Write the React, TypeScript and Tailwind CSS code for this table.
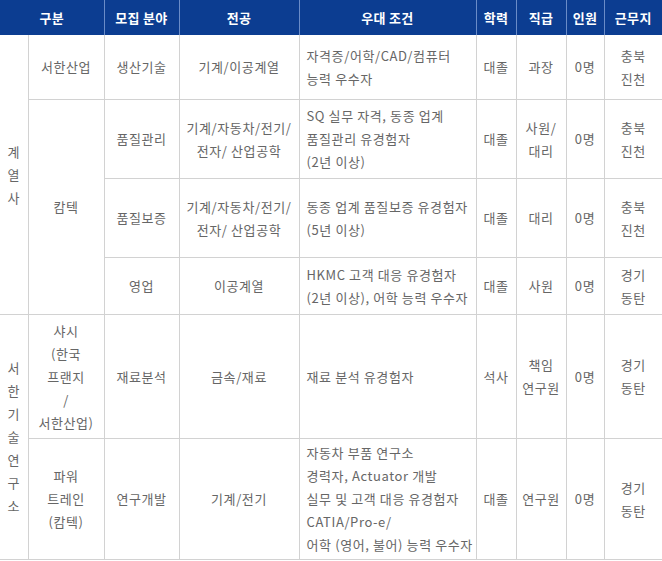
import React from "react";

const font = { fontFamily: '"Noto Sans CJK KR", "Noto Sans", sans-serif' };

function V({ text }: { text: string }) {
  return (
    <div className="flex flex-col items-center leading-[23px]">
      {text.split("").map((c, i) => (
        <span key={i}>{c}</span>
      ))}
    </div>
  );
}

function L({ lines }: { lines: string[] }) {
  return (
    <>
      {lines.map((l, i) => (
        <div key={i}>{l}</div>
      ))}
    </>
  );
}

const td = "border-b border-r border-[#d2d2d2] text-center align-middle p-0";
const tdL = "border-b border-r border-[#d2d2d2] text-left align-middle pl-[7px] pr-0";
const tdLast = "border-b border-[#d2d2d2] text-center align-middle p-0";

export default function App() {
  return (
    <div className="w-[662px] h-[561px] bg-white overflow-hidden" style={font}>
      <table className="border-collapse table-fixed w-[662px] text-[13px] leading-[23px] text-[#666666] tracking-[0.6px]">
        <colgroup>
          <col className="w-[28px]" />
          <col className="w-[76px]" />
          <col className="w-[75px]" />
          <col className="w-[120px]" />
          <col className="w-[177px]" />
          <col className="w-[40px]" />
          <col className="w-[50px]" />
          <col className="w-[38px]" />
          <col className="w-[58px]" />
        </colgroup>
        <thead>
          <tr className="h-[35px] bg-[#0c3d91] text-white font-bold text-[13px] tracking-[0.3px]">
            <th colSpan={2} className="border-r border-[#6a8cc8] font-bold">구분</th>
            <th className="border-r border-[#6a8cc8] font-bold">모집 분야</th>
            <th className="border-r border-[#6a8cc8] font-bold">전공</th>
            <th className="border-r border-[#6a8cc8] font-bold">우대 조건</th>
            <th className="border-r border-[#6a8cc8] font-bold">학력</th>
            <th className="border-r border-[#6a8cc8] font-bold">직급</th>
            <th className="border-r border-[#6a8cc8] font-bold">인원</th>
            <th className="font-bold">근무지</th>
          </tr>
        </thead>
        <tbody>
          <tr className="h-[64px]">
            <td rowSpan={4} className={td}>
              <V text="계열사" />
            </td>
            <td className={td}>서한산업</td>
            <td className={td}>생산기술</td>
            <td className={td}>기계/이공계열</td>
            <td className={tdL}>
              <L lines={["자격증/어학/CAD/컴퓨터", "능력 우수자"]} />
            </td>
            <td className={td}>대졸</td>
            <td className={td}>과장</td>
            <td className={td}>0명</td>
            <td className={tdLast}>
              <L lines={["충북", "진천"]} />
            </td>
          </tr>
          <tr className="h-[79px]">
            <td rowSpan={3} className={td}>캄텍</td>
            <td className={td}>품질관리</td>
            <td className={td}>
              <L lines={["기계/자동차/전기/", "전자/ 산업공학"]} />
            </td>
            <td className={tdL}>
              <L lines={["SQ 실무 자격, 동종 업계", "품질관리 유경험자", "(2년 이상)"]} />
            </td>
            <td className={td}>대졸</td>
            <td className={td}>
              <L lines={["사원/", "대리"]} />
            </td>
            <td className={td}>0명</td>
            <td className={tdLast}>
              <L lines={["충북", "진천"]} />
            </td>
          </tr>
          <tr className="h-[79px]">
            <td className={td}>품질보증</td>
            <td className={td}>
              <L lines={["기계/자동차/전기/", "전자/ 산업공학"]} />
            </td>
            <td className={tdL}>
              <L lines={["동종 업계 품질보증 유경험자", "(5년 이상)"]} />
            </td>
            <td className={td}>대졸</td>
            <td className={td}>대리</td>
            <td className={td}>0명</td>
            <td className={tdLast}>
              <L lines={["충북", "진천"]} />
            </td>
          </tr>
          <tr className="h-[57px]">
            <td className={td}>영업</td>
            <td className={td}>이공계열</td>
            <td className={tdL}>
              <L lines={["HKMC 고객 대응 유경험자", "(2년 이상), 어학 능력 우수자"]} />
            </td>
            <td className={td}>대졸</td>
            <td className={td}>사원</td>
            <td className={td}>0명</td>
            <td className={tdLast}>
              <L lines={["경기", "동탄"]} />
            </td>
          </tr>
          <tr className="h-[124px]">
            <td rowSpan={2} className={td}>
              <V text="서한기술연구소" />
            </td>
            <td className={td}>
              <L lines={["샤시", "(한국", "프랜지", "/", "서한산업)"]} />
            </td>
            <td className={td}>재료분석</td>
            <td className={td}>금속/재료</td>
            <td className={tdL}>재료 분석 유경험자</td>
            <td className={td}>석사</td>
            <td className={td}>
              <L lines={["책임", "연구원"]} />
            </td>
            <td className={td}>0명</td>
            <td className={tdLast}>
              <L lines={["경기", "동탄"]} />
            </td>
          </tr>
          <tr className="h-[121px]">
            <td className={td}>
              <L lines={["파워", "트레인", "(캄텍)"]} />
            </td>
            <td className={td}>연구개발</td>
            <td className={td}>기계/전기</td>
            <td className={tdL}>
              <L
                lines={[
                  "자동차 부품 연구소",
                  "경력자, Actuator 개발",
                  "실무 및 고객 대응 유경험자",
                  "CATIA/Pro-e/",
                  "어학 (영어, 불어) 능력 우수자",
                ]}
              />
            </td>
            <td className={td}>대졸</td>
            <td className={td}>연구원</td>
            <td className={td}>0명</td>
            <td className={tdLast}>
              <L lines={["경기", "동탄"]} />
            </td>
          </tr>
        </tbody>
      </table>
    </div>
  );
}
